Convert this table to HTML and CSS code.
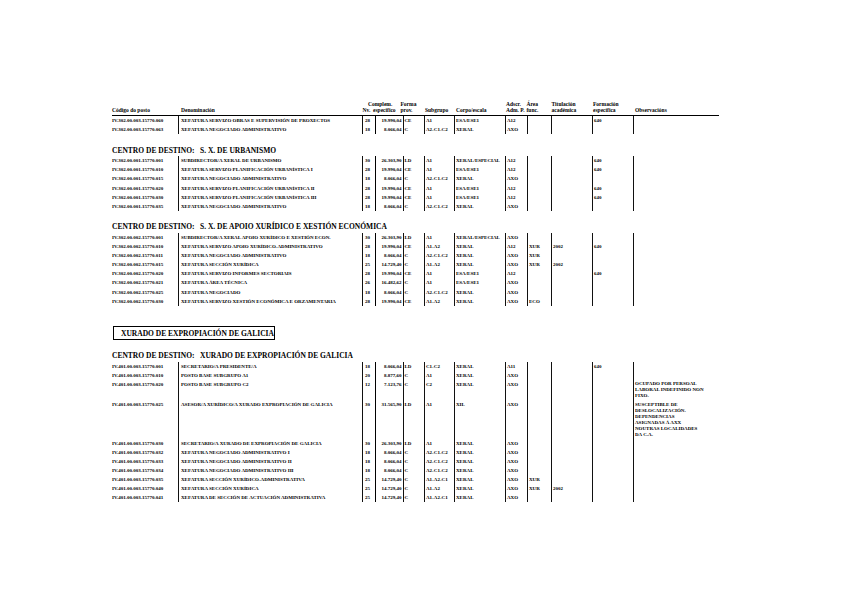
FILE: index.html
```html
<!DOCTYPE html>
<html lang="gl">
<head>
<meta charset="utf-8">
<title>RPT</title>
<link rel="stylesheet" href="styles.css">
</head>
<body>
<div class="page">
  <div class="hdr">
    <div class="h">Código do posto</div>
    <div class="h">Denominación</div>
    <div class="h nvh">Nv.</div>
    <div class="h">Complem.<br><span class="ind">especifico</span></div>
    <div class="h">Forma<br>prov.</div>
    <div class="h">Subgrupo</div>
    <div class="h">Corpo/escala</div>
    <div class="h">Adscr.<br>Adm. P.</div>
    <div class="h">Área<br>func.</div>
    <div class="h">Titulación<br>académica</div>
    <div class="h">Formación<br>específica</div>
    <div class="h">Observacións</div>
  </div>

  <div class="group g1">
    <div class="row"><div class="c code">IV.302.00.003.15770.060</div><div class="c den">XEFATURA SERVIZO OBRAS E SUPERVISIÓN DE PROXECTOS</div><div class="c nv">28</div><div class="c comp">19.990,04</div><div class="c fp">CE</div><div class="c sg">A1</div><div class="c ce">ESA/ESE1</div><div class="c ad">A12</div><div class="c ar"></div><div class="c ti"></div><div class="c fe">640</div><div class="c ob"></div></div>
    <div class="row"><div class="c code">IV.302.00.003.15770.063</div><div class="c den">XEFATURA NEGOCIADO ADMINISTRATIVO</div><div class="c nv">18</div><div class="c comp">8.066,04</div><div class="c fp">C</div><div class="c sg">A2-C1-C2</div><div class="c ce">XERAL</div><div class="c ad">AXO</div><div class="c ar"></div><div class="c ti"></div><div class="c fe"></div><div class="c ob"></div></div>
  </div>

  <div class="title"><span class="lbl">CENTRO DE DESTINO:</span>S. X. DE URBANISMO</div>
  <div class="group">
    <div class="row"><div class="c code">IV.302.00.001.15770.001</div><div class="c den">SUBDIRECTOR/A XERAL DE URBANISMO</div><div class="c nv">30</div><div class="c comp">26.303,90</div><div class="c fp">LD</div><div class="c sg">A1</div><div class="c ce">XERAL/ESPECIAL</div><div class="c ad">A12</div><div class="c ar"></div><div class="c ti"></div><div class="c fe">640</div><div class="c ob"></div></div>
    <div class="row"><div class="c code">IV.302.00.001.15770.010</div><div class="c den">XEFATURA SERVIZO PLANIFICACIÓN URBANÍSTICA I</div><div class="c nv">28</div><div class="c comp">19.990,04</div><div class="c fp">CE</div><div class="c sg">A1</div><div class="c ce">ESA/ESE1</div><div class="c ad">A12</div><div class="c ar"></div><div class="c ti"></div><div class="c fe">640</div><div class="c ob"></div></div>
    <div class="row"><div class="c code">IV.302.00.001.15770.015</div><div class="c den">XEFATURA NEGOCIADO ADMINISTRATIVO</div><div class="c nv">18</div><div class="c comp">8.066,04</div><div class="c fp">C</div><div class="c sg">A2-C1-C2</div><div class="c ce">XERAL</div><div class="c ad">AXO</div><div class="c ar"></div><div class="c ti"></div><div class="c fe"></div><div class="c ob"></div></div>
    <div class="row"><div class="c code">IV.302.00.001.15770.020</div><div class="c den">XEFATURA SERVIZO PLANIFICACIÓN URBANÍSTICA II</div><div class="c nv">28</div><div class="c comp">19.990,04</div><div class="c fp">CE</div><div class="c sg">A1</div><div class="c ce">ESA/ESE1</div><div class="c ad">A12</div><div class="c ar"></div><div class="c ti"></div><div class="c fe">640</div><div class="c ob"></div></div>
    <div class="row"><div class="c code">IV.302.00.001.15770.030</div><div class="c den">XEFATURA SERVIZO PLANIFICACIÓN URBANÍSTICA III</div><div class="c nv">28</div><div class="c comp">19.990,04</div><div class="c fp">CE</div><div class="c sg">A1</div><div class="c ce">ESA/ESE1</div><div class="c ad">A12</div><div class="c ar"></div><div class="c ti"></div><div class="c fe">640</div><div class="c ob"></div></div>
    <div class="row"><div class="c code">IV.302.00.001.15770.035</div><div class="c den">XEFATURA NEGOCIADO ADMINISTRATIVO</div><div class="c nv">18</div><div class="c comp">8.066,04</div><div class="c fp">C</div><div class="c sg">A2-C1-C2</div><div class="c ce">XERAL</div><div class="c ad">AXO</div><div class="c ar"></div><div class="c ti"></div><div class="c fe"></div><div class="c ob"></div></div>
  </div>

  <div class="title"><span class="lbl">CENTRO DE DESTINO:</span>S. X. DE APOIO XURÍDICO E XESTIÓN ECONÓMICA</div>
  <div class="group">
    <div class="row"><div class="c code">IV.302.00.002.15770.001</div><div class="c den">SUBDIRECTOR/A XERAL APOIO XURÍDICO E XESTIÓN ECON.</div><div class="c nv">30</div><div class="c comp">26.303,90</div><div class="c fp">LD</div><div class="c sg">A1</div><div class="c ce">XERAL/ESPECIAL</div><div class="c ad">AXO</div><div class="c ar"></div><div class="c ti"></div><div class="c fe"></div><div class="c ob"></div></div>
    <div class="row"><div class="c code">IV.302.00.002.15770.010</div><div class="c den">XEFATURA SERVIZO APOIO XURÍDICO-ADMINISTRATIVO</div><div class="c nv">28</div><div class="c comp">19.990,04</div><div class="c fp">CE</div><div class="c sg">A1-A2</div><div class="c ce">XERAL</div><div class="c ad">A12</div><div class="c ar">XUR</div><div class="c ti">2002</div><div class="c fe">640</div><div class="c ob"></div></div>
    <div class="row"><div class="c code">IV.302.00.002.15770.011</div><div class="c den">XEFATURA NEGOCIADO ADMINISTRATIVO</div><div class="c nv">18</div><div class="c comp">8.066,04</div><div class="c fp">C</div><div class="c sg">A2-C1-C2</div><div class="c ce">XERAL</div><div class="c ad">AXO</div><div class="c ar">XUR</div><div class="c ti"></div><div class="c fe"></div><div class="c ob"></div></div>
    <div class="row"><div class="c code">IV.302.00.002.15770.015</div><div class="c den">XEFATURA SECCIÓN XURÍDICA</div><div class="c nv">25</div><div class="c comp">14.729,40</div><div class="c fp">C</div><div class="c sg">A1-A2</div><div class="c ce">XERAL</div><div class="c ad">AXO</div><div class="c ar">XUR</div><div class="c ti">2002</div><div class="c fe"></div><div class="c ob"></div></div>
    <div class="row"><div class="c code">IV.302.00.002.15770.020</div><div class="c den">XEFATURA SERVIZO INFORMES SECTORIAIS</div><div class="c nv">28</div><div class="c comp">19.990,04</div><div class="c fp">CE</div><div class="c sg">A1</div><div class="c ce">ESA/ESE1</div><div class="c ad">A12</div><div class="c ar"></div><div class="c ti"></div><div class="c fe">640</div><div class="c ob"></div></div>
    <div class="row"><div class="c code">IV.302.00.002.15770.021</div><div class="c den">XEFATURA ÁREA TÉCNICA</div><div class="c nv">26</div><div class="c comp">16.482,62</div><div class="c fp">C</div><div class="c sg">A1</div><div class="c ce">ESA/ESE1</div><div class="c ad">AXO</div><div class="c ar"></div><div class="c ti"></div><div class="c fe"></div><div class="c ob"></div></div>
    <div class="row"><div class="c code">IV.302.00.002.15770.025</div><div class="c den">XEFATURA NEGOCIADO</div><div class="c nv">18</div><div class="c comp">8.066,04</div><div class="c fp">C</div><div class="c sg">A2-C1-C2</div><div class="c ce">XERAL</div><div class="c ad">AXO</div><div class="c ar"></div><div class="c ti"></div><div class="c fe"></div><div class="c ob"></div></div>
    <div class="row"><div class="c code">IV.302.00.002.15770.030</div><div class="c den">XEFATURA SERVIZO XESTIÓN ECONÓMICA E ORZAMENTARIA</div><div class="c nv">28</div><div class="c comp">19.990,04</div><div class="c fp">CE</div><div class="c sg">A1-A2</div><div class="c ce">XERAL</div><div class="c ad">AXO</div><div class="c ar">ECO</div><div class="c ti"></div><div class="c fe"></div><div class="c ob"></div></div>
  </div>

  <div class="boxwrap"><div class="box">XURADO DE EXPROPIACIÓN DE GALICIA</div></div>

  <div class="title t4"><span class="lbl">CENTRO DE DESTINO:</span>XURADO DE EXPROPIACIÓN DE GALICIA</div>
  <div class="group">
    <div class="row"><div class="c code">IV.401.00.003.15770.001</div><div class="c den">SECRETARIO/A PRESIDENTE/A</div><div class="c nv">18</div><div class="c comp">8.066,04</div><div class="c fp">LD</div><div class="c sg">C1-C2</div><div class="c ce">XERAL</div><div class="c ad">A11</div><div class="c ar"></div><div class="c ti"></div><div class="c fe">640</div><div class="c ob"></div></div>
    <div class="row"><div class="c code">IV.401.00.003.15770.010</div><div class="c den">POSTO BASE SUBGRUPO A1</div><div class="c nv">20</div><div class="c comp">8.877,60</div><div class="c fp">C</div><div class="c sg">A1</div><div class="c ce">XERAL</div><div class="c ad">AXO</div><div class="c ar"></div><div class="c ti"></div><div class="c fe"></div><div class="c ob"></div></div>
    <div class="row"><div class="c code">IV.401.00.003.15770.020</div><div class="c den">POSTO BASE SUBGRUPO C2</div><div class="c nv">12</div><div class="c comp">7.123,76</div><div class="c fp">C</div><div class="c sg">C2</div><div class="c ce">XERAL</div><div class="c ad">AXO</div><div class="c ar"></div><div class="c ti"></div><div class="c fe"></div><div class="c ob obt">OCUPADO POR PERSOAL<br>LABORAL INDEFINIDO NON<br>FIXO.</div></div>
    <div class="row"><div class="c code">IV.401.00.003.15770.025</div><div class="c den">ASESOR/A XURÍDICO/A XURADO EXPROPIACIÓN DE GALICIA</div><div class="c nv">30</div><div class="c comp">31.565,90</div><div class="c fp">LD</div><div class="c sg">A1</div><div class="c ce">XIL</div><div class="c ad">AXO</div><div class="c ar"></div><div class="c ti"></div><div class="c fe"></div><div class="c ob obt">SUSCEPTIBLE DE<br>DESLOCALIZACIÓN.<br>DEPENDENCIAS<br>ASIGNADAS Á AXX<br>NOUTRAS LOCALIDADES<br>DA C.A.</div></div>
    <div class="row"><div class="c code">IV.401.00.003.15770.030</div><div class="c den">SECRETARIO/A XURADO DE EXPROPIACIÓN DE GALICIA</div><div class="c nv">30</div><div class="c comp">26.303,90</div><div class="c fp">LD</div><div class="c sg">A1</div><div class="c ce">XERAL</div><div class="c ad">AXO</div><div class="c ar"></div><div class="c ti"></div><div class="c fe"></div><div class="c ob"></div></div>
    <div class="row"><div class="c code">IV.401.00.003.15770.032</div><div class="c den">XEFATURA NEGOCIADO ADMINISTRATIVO I</div><div class="c nv">18</div><div class="c comp">8.066,04</div><div class="c fp">C</div><div class="c sg">A2-C1-C2</div><div class="c ce">XERAL</div><div class="c ad">AXO</div><div class="c ar"></div><div class="c ti"></div><div class="c fe"></div><div class="c ob"></div></div>
    <div class="row"><div class="c code">IV.401.00.003.15770.033</div><div class="c den">XEFATURA NEGOCIADO ADMINISTRATIVO II</div><div class="c nv">18</div><div class="c comp">8.066,04</div><div class="c fp">C</div><div class="c sg">A2-C1-C2</div><div class="c ce">XERAL</div><div class="c ad">AXO</div><div class="c ar"></div><div class="c ti"></div><div class="c fe"></div><div class="c ob"></div></div>
    <div class="row"><div class="c code">IV.401.00.003.15770.034</div><div class="c den">XEFATURA NEGOCIADO ADMINISTRATIVO III</div><div class="c nv">18</div><div class="c comp">8.066,04</div><div class="c fp">C</div><div class="c sg">A2-C1-C2</div><div class="c ce">XERAL</div><div class="c ad">AXO</div><div class="c ar"></div><div class="c ti"></div><div class="c fe"></div><div class="c ob"></div></div>
    <div class="row"><div class="c code">IV.401.00.003.15770.035</div><div class="c den">XEFATURA SECCIÓN XURÍDICO-ADMINISTRATIVA</div><div class="c nv">25</div><div class="c comp">14.729,40</div><div class="c fp">C</div><div class="c sg">A1-A2-C1</div><div class="c ce">XERAL</div><div class="c ad">AXO</div><div class="c ar">XUR</div><div class="c ti"></div><div class="c fe"></div><div class="c ob"></div></div>
    <div class="row"><div class="c code">IV.401.00.003.15770.040</div><div class="c den">XEFATURA SECCIÓN XURÍDICA</div><div class="c nv">25</div><div class="c comp">14.729,40</div><div class="c fp">C</div><div class="c sg">A1-A2</div><div class="c ce">XERAL</div><div class="c ad">AXO</div><div class="c ar">XUR</div><div class="c ti">2002</div><div class="c fe"></div><div class="c ob"></div></div>
    <div class="row"><div class="c code">IV.401.00.003.15770.041</div><div class="c den">XEFATURA DE SECCIÓN DE ACTUACIÓN ADMINISTRATIVA</div><div class="c nv">25</div><div class="c comp">14.729,40</div><div class="c fp">C</div><div class="c sg">A1-A2-C1</div><div class="c ce">XERAL</div><div class="c ad">AXO</div><div class="c ar"></div><div class="c ti"></div><div class="c fe"></div><div class="c ob"></div></div>
  </div>
</div>
</body>
</html>
```
FILE: styles.css
```css
html, body {
  margin: 0;
  padding: 0;
  background: #fff;
}
body {
  font-family: "Liberation Serif", "Times New Roman", serif;
  font-weight: bold;
  color: #000;
}
.page {
  width: 607px;
  margin-left: 112px;
  padding-top: 101px;
}
.hdr {
  display: grid;
  grid-template-columns: 69px 181.5px 5.5px 32.5px 24.5px 31px 50px 20.5px 25px 41.5px 42px 84px;
  align-items: end;
  font-size: 5.5px;
  line-height: 6px;
  padding-bottom: 2px;
  border-bottom: 1px solid #000;
  white-space: nowrap;
}
.h { overflow: visible; }
.ind { padding-left: 5px; }
.group { display: flex; flex-direction: column; }
.row {
  display: grid;
  grid-template-columns: 66px 184px 13px 28px 21px 30px 51px 22px 24px 41px 41px 86px;
  font-size: 5px;
  line-height: 9.1px;
  white-space: nowrap;
}
.c {
  border-left: 1px solid #111;
  padding-left: 1px;
  overflow: visible;
}
.c.code { border-left: none; padding-left: 0; }
.c.den { padding-left: 2px; }
.c.nv { padding-left: 2px; }
.c.comp { text-align: right; padding-right: 1.5px; border-left-color: #000; }
.c.fp { padding-left: 0.5px; }
.c.sg { padding-left: 1px; }
.obt {
  line-height: 6.1px;
  padding-top: 1.4px;
  padding-bottom: 0.6px;
}
.title {
  font-size: 7.5px;
  line-height: 10.5px;
  white-space: nowrap;
  margin-top: 12.8px;
}
.group + .title { margin-top: 11.6px; }
.lbl {
  display: inline-block;
  width: 88px;
}
.boxwrap {
  margin-top: 16px;
  padding-left: 1px;
}
.box {
  display: inline-flex;
  align-items: center;
  box-sizing: border-box;
  width: 162px;
  height: 14px;
  padding-left: 7px;
  border: 1px solid #000;
  font-size: 7.5px;
  white-space: nowrap;
}
.title.t4 { margin-top: 11px; }
```
